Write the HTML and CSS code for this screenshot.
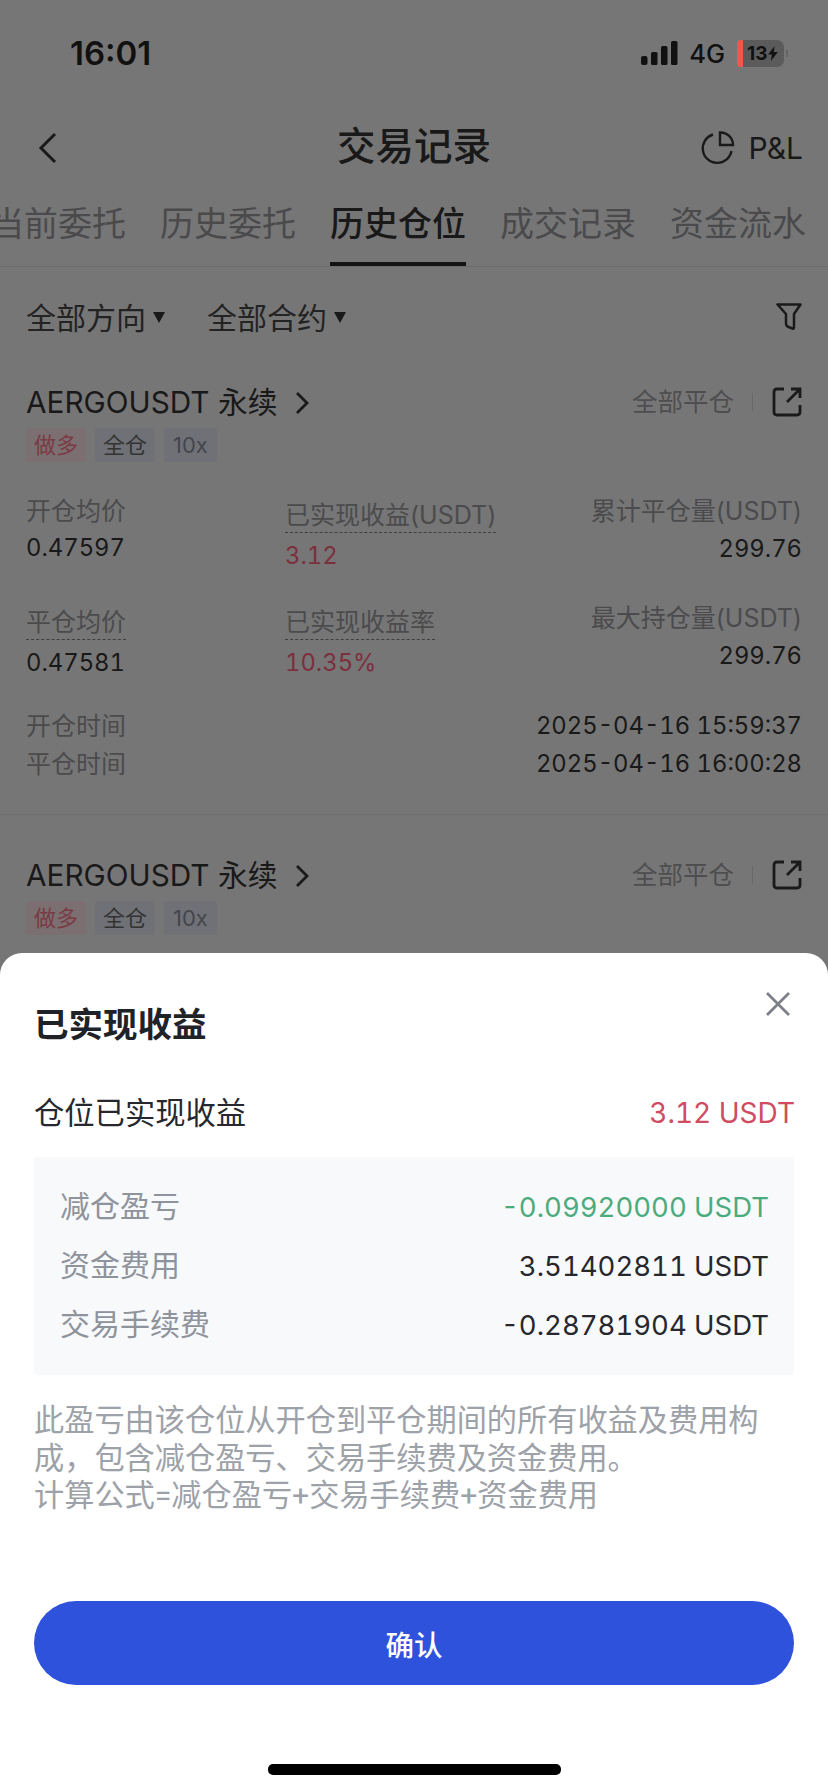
FILE: index.html
```html
<!DOCTYPE html>
<html lang="zh-CN">
<head>
    <meta charset="UTF-8">
    <title>交易记录</title>
    <link rel="stylesheet" href="styles.css">
</head>
<body>
    <div class="page">
        <div class="status-bar">
            <span class="clock">16:01</span>
            <div class="status-right">
                <svg class="signal" width="37" height="25" viewBox="0 0 37 25"><rect x="0" y="15" width="6.500" height="9" rx="2"/><rect x="10" y="11" width="6.500" height="13" rx="1.500"/><rect x="20" y="5" width="6.500" height="19" rx="1.500"/><rect x="30" y="0" width="6.500" height="24" rx="1.500"/></svg>
                <span class="net">4G</span>
                <div class="battery"><span class="battery-low"></span><span class="battery-num">13</span><svg width="10" height="15" viewBox="0 0 9 14"><path d="M6 0 0 8h3.500L2.500 14 9 5.500H5.200z"/></svg></div>
            </div>
        </div>

        <div class="nav">
            <svg class="back" width="22" height="32" viewBox="0 0 22 32"><path d="M19 2 5 16l14 14" fill="none" stroke="#1a1a1a" stroke-width="3"/></svg>
            <h1>交易记录</h1>
            <div class="pnl">
                <svg width="35" height="35" viewBox="0 0 35 35" fill="none" stroke="#1a1a1a" stroke-width="2.400"><path d="M13 3.500A14.500 14.500 0 1 0 31.500 20"/><path d="M20 1.500a12.500 12.500 0 0 1 13 12.500H20z"/></svg>
                <span>P&amp;L</span>
            </div>
        </div>

        <div class="tabs">
            <span class="tab">当前委托</span>
            <span class="tab">历史委托</span>
            <span class="tab active">历史仓位</span>
            <span class="tab">成交记录</span>
            <span class="tab">资金流水</span>
        </div>

        <div class="filters">
            <div class="filter">全部方向<i class="caret"></i></div>
            <div class="filter">全部合约<i class="caret"></i></div>
            <svg class="funnel" width="26" height="27" viewBox="0 0 26 27" fill="none" stroke="#1a1a1a" stroke-width="2.500" stroke-linejoin="round"><path d="M1.500 1.500h23l-6.500 9.500v13.500q0 1.500-1.500 1l-4-1.500q-2.500-1-2.500-3.500v-9.500z"/></svg>
        </div>

        <div class="position with-divider">
            <div class="pos-head">
                <div class="pos-name">AERGOUSDT 永续<svg width="16" height="24" viewBox="0 0 16 24"><path d="M3 2l10 10-10 10" fill="none" stroke="#1a1a1a" stroke-width="2.800"/></svg></div>
                <div class="pos-actions">
                    <span class="close-all">全部平仓</span>
                    <i class="sep"></i>
                    <svg class="share" width="30" height="30" viewBox="0 0 30 30" fill="none" stroke="#1a1a1a" stroke-width="2.800"><path d="M12 2H5Q2 2 2 5v20q0 3 3 3h20q3 0 3-3v-7"/><path d="M15 15 28 2M19 2h9v9"/></svg>
                </div>
            </div>
            <div class="tags"><span class="tag tag-long">做多</span><span class="tag">全仓</span><span class="tag tag-lev">10x</span></div>
            <div class="stats">
                <div class="stat">
                    <div class="label">开仓均价</div>
                    <div class="val">0.47597</div>
                </div>
                <div class="stat">
                    <div class="label dotted">已实现收益(USDT)</div>
                    <div class="val red">3.12</div>
                </div>
                <div class="stat stat-right">
                    <div class="label">累计平仓量(USDT)</div>
                    <div class="val">299.76</div>
                </div>
                <div class="stat">
                    <div class="label dotted">平仓均价</div>
                    <div class="val">0.47581</div>
                </div>
                <div class="stat">
                    <div class="label dotted">已实现收益率</div>
                    <div class="val red">10.35%</div>
                </div>
                <div class="stat stat-right">
                    <div class="label">最大持仓量(USDT)</div>
                    <div class="val">299.76</div>
                </div>
            </div>
            <div class="time-row"><span class="label">开仓时间</span><span class="val">2025-04-16 15:59:37</span></div>
            <div class="time-row"><span class="label">平仓时间</span><span class="val">2025-04-16 16:00:28</span></div>
        </div>

        <div class="position second">
            <div class="pos-head">
                <div class="pos-name">AERGOUSDT 永续<svg width="16" height="24" viewBox="0 0 16 24"><path d="M3 2l10 10-10 10" fill="none" stroke="#1a1a1a" stroke-width="2.800"/></svg></div>
                <div class="pos-actions">
                    <span class="close-all">全部平仓</span>
                    <i class="sep"></i>
                    <svg class="share" width="30" height="30" viewBox="0 0 30 30" fill="none" stroke="#1a1a1a" stroke-width="2.800"><path d="M12 2H5Q2 2 2 5v20q0 3 3 3h20q3 0 3-3v-7"/><path d="M15 15 28 2M19 2h9v9"/></svg>
                </div>
            </div>
            <div class="tags"><span class="tag tag-long">做多</span><span class="tag">全仓</span><span class="tag tag-lev">10x</span></div>
        </div>
    </div>

    <div class="sheet">
        <svg class="close" width="24" height="24" viewBox="0 0 24 24"><path d="M1 1l22 22M23 1 1 23" stroke="#7d8087" stroke-width="2.800" fill="none"/></svg>
        <h2>已实现收益</h2>
        <div class="summary"><span>仓位已实现收益</span><span class="sum-val">3.12 USDT</span></div>
        <div class="detail">
            <div class="detail-row"><span>减仓盈亏</span><b class="green">-0.09920000 USDT</b></div>
            <div class="detail-row"><span>资金费用</span><b>3.51402811 USDT</b></div>
            <div class="detail-row"><span>交易手续费</span><b>-0.28781904 USDT</b></div>
        </div>
        <p class="note">此盈亏由该仓位从开仓到平仓期间的所有收益及费用构成，包含减仓盈亏、交易手续费及资金费用。<br>计算公式=减仓盈亏+交易手续费+资金费用</p>
        <button class="confirm">确认</button>
        <div class="home-bar"></div>
    </div>
</body>
</html>
```
FILE: styles.css
```css
* {
    box-sizing: border-box;
}
html, body {
    margin: 0;
    height: 1792px;
    overflow: hidden;
}
body {
    position: relative;
    width: 828px;
    background: #767676;
    color: #191919;
    font-family: Inter, "Noto Sans CJK SC", sans-serif;
}
.status-bar {
    height: 106px;
    padding: 33px 44px 0 70px;
    display: flex;
    justify-content: space-between;
    align-items: flex-start;
}
.clock {
    font-size: 33px;
    line-height: 40px;
    font-weight: 600;
    color: #111;
}
.status-right {
    display: flex;
    align-items: center;
    height: 40px;
}
.signal {
    fill: #111;
    margin-right: 11px;
}
.net {
    font-size: 25.500px;
    font-weight: 500;
    color: #111;
    margin-right: 12px;
}
.battery {
    position: relative;
    width: 47px;
    height: 27px;
    border-radius: 7px;
    background: #5b5b5b;
    display: flex;
    align-items: center;
}
.battery::after {
    content: "";
    position: absolute;
    right: -4px;
    top: 10px;
    width: 2px;
    height: 7px;
    background: #666;
}
.battery svg {
    fill: #111;
}
.battery-low {
    width: 6px;
    height: 100%;
    background: #f0564a;
    margin-right: 4px;
    border-radius: 3px 0 0 3px;
}
.battery-num {
    font-size: 19px;
    font-weight: 700;
    color: #111;
    margin-right: 1px;
}
.nav {
    height: 84px;
    padding: 0 25px 0 36px;
    display: flex;
    align-items: center;
    justify-content: space-between;
    position: relative;
}
.nav h1 {
    position: absolute;
    left: 0;
    right: 0;
    top: 18px;
    margin: 0;
    text-align: center;
    font-size: 38.500px;
    line-height: 44px;
    font-weight: 500;
}
.pnl {
    display: flex;
    align-items: center;
    gap: 14px;
    font-size: 30px;
}
.tabs {
    height: 77px;
    display: flex;
    gap: 34px;
    border-bottom: 1px solid #6c6c6c;
    margin-left: -10px;
    margin-right: -10px;
    overflow: hidden;
}
.tab {
    flex: none;
    height: 76px;
    font-size: 34px;
    line-height: 68px;
    color: #4a4a4c;
    white-space: nowrap;
}
.active {
    color: #191919;
    font-weight: 500;
    border-bottom: 4px solid #141414;
}
.filters {
    height: 104px;
    padding: 0 26px 6px;
    display: flex;
    align-items: center;
    gap: 42px;
    font-size: 30px;
    color: #232323;
}
.filter {
    display: flex;
    align-items: center;
}
.caret {
    margin-left: 7px;
    margin-top: 2px;
    border-left: 6px solid transparent;
    border-right: 6px solid transparent;
    border-top: 11px solid #191919;
}
.funnel {
    margin-left: auto;
}
.position {
    padding: 0 26px;
    margin-top: 13px;
    height: 431px;
}
.with-divider {
    border-bottom: 1px solid #6e6e6e;
}
.second {
    margin-top: 42px;
}
.pos-head {
    height: 36px;
    display: flex;
    align-items: center;
    justify-content: space-between;
}
.pos-name {
    font-size: 29.750px;
    line-height: 30px;
    margin-top: -1px;
    display: flex;
    align-items: center;
    gap: 17px;
}
.pos-name svg {
    margin-top: 2px;
}
.pos-actions {
    display: flex;
    align-items: center;
}
.close-all {
    font-size: 25.500px;
    line-height: 30px;
    color: #4e4e50;
}
.sep {
    width: 1px;
    height: 18px;
    background: #696969;
    margin: 0 19px 0 18px;
}
.tags {
    margin-top: 8px;
    display: flex;
    gap: 9px;
}
.tag {
    height: 34px;
    padding: 0 8px;
    font-size: 22px;
    line-height: 34px;
    border-radius: 3px;
    background: #6f7177;
    color: #333;
}
.tag-long {
    background: #7b6f71;
    color: #7a3a44;
}
.tag-lev {
    padding: 0 9px;
    color: #44464c;
}
.stats {
    margin-top: 33px;
    display: grid;
    grid-template-columns: 259px 1fr auto;
    grid-template-rows: 107px auto;
}
.label {
    font-size: 25px;
    line-height: 32px;
    color: #4b4b4d;
}
.val {
    font-size: 23.800px;
    line-height: 32px;
    font-variant-numeric: tabular-nums;
    color: #191919;
    margin-top: 5px;
}
.red {
    color: #7c2f3d;
}
.stat-right {
    text-align: right;
}
.stat-right .val {
    margin-top: 6px;
}
.dotted {
    width: fit-content;
    margin-top: 5px;
    line-height: 30px;
    padding-bottom: 2px;
    border-bottom: 1px dashed #3f3f41;
}
.dotted + .val {
    margin-top: 7px;
}
.time-row {
    display: flex;
    justify-content: space-between;
    align-items: center;
    height: 38px;
}
.stats + .time-row {
    margin-top: 28px;
}
.time-row .val {
    margin-top: 0;
}
.sheet {
    position: absolute;
    left: 0;
    right: 0;
    top: 953px;
    height: 839px;
    background: #fff;
    border-radius: 22px 22px 0 0;
    padding: 0 34px;
}
.close {
    position: absolute;
    top: 39px;
    right: 38px;
}
.sheet h2 {
    margin: 0;
    padding-top: 50px;
    font-size: 34.500px;
    line-height: 44px;
    font-weight: 600;
    color: #1f2227;
}
.summary {
    margin-top: 46px;
    display: flex;
    justify-content: space-between;
    align-items: center;
    font-size: 30.300px;
    line-height: 40px;
    color: #26282d;
}
.sum-val {
    color: #cf4c62;
    font-size: 28px;
    font-variant-numeric: tabular-nums;
    margin-right: -1px;
}
.detail {
    margin-top: 24px;
    height: 218px;
    padding: 20px 25px 0 26px;
    background: #f7f9fb;
    border-radius: 4px;
}
.detail-row {
    height: 59px;
    display: flex;
    justify-content: space-between;
    align-items: center;
    font-size: 30px;
    color: #8f939b;
}
.detail-row span {
    padding-bottom: 6px;
}
.detail-row b {
    font-weight: 400;
    font-size: 27.500px;
    font-variant-numeric: tabular-nums;
    color: #26282d;
}
.detail-row .green {
    color: #4cab7d;
}
.note {
    margin: 27px 0 0;
    font-family: Roboto, "Noto Sans CJK SC", sans-serif;
    font-size: 30.200px;
    line-height: 37.500px;
    color: #9da1a8;
}
.confirm {
    display: block;
    position: absolute;
    left: 34px;
    top: 648px;
    width: 760px;
    height: 84px;
    border: none;
    border-radius: 42px;
    background: #2e52dc;
    color: #fff;
    font-family: inherit;
    font-size: 28.500px;
    font-weight: 500;
}
.home-bar {
    position: absolute;
    left: 268px;
    bottom: 17px;
    width: 293px;
    height: 11px;
    border-radius: 5px;
    background: #000;
}
```
